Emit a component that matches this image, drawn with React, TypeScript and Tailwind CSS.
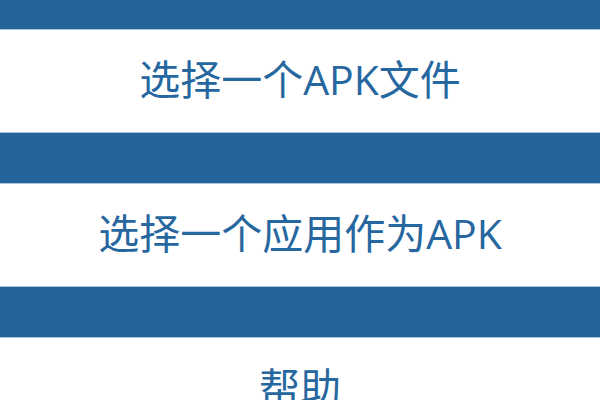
export default function App() {
  const items = ["选择一个APK文件", "选择一个应用作为APK", "帮助"];
  return (
    <div
      className="h-screen w-full overflow-hidden bg-[#23649b] flex flex-col gap-[50px] pt-[29px]"
      style={{ fontFamily: '"Open Sans", "Noto Sans CJK SC", sans-serif' }}
    >
      {items.map((t) => (
        <div
          key={t}
          className="h-[104px] shrink-0 bg-white border-y border-[#a9c3dc] flex items-center justify-center pb-[3px] text-[41px] leading-none text-[#2767a0]"
        >
          {t}
        </div>
      ))}
    </div>
  );
}
